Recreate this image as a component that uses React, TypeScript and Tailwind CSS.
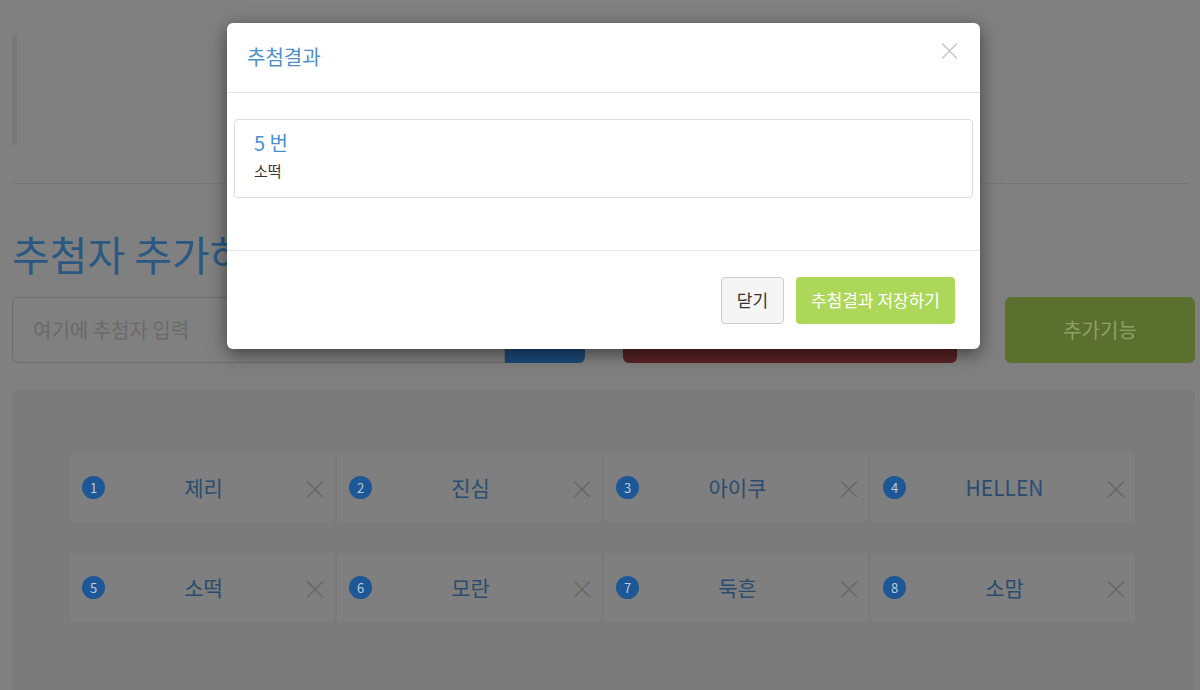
import React from "react";

const names = ["제리", "진심", "아이쿠", "HELLEN", "소떡", "모란", "둑흔", "소맘"];

function Card({ n, name }: { n: number; name: string }) {
  return (
    <div className="relative flex h-[71px] w-[266px] items-center rounded-[3px] border border-[#7a7a7a] bg-[#7f7f7f] pl-[12px] pr-[8px]">
      <div className="flex h-[23px] w-[23px] items-center justify-center rounded-full bg-[#1d5796] text-[13px] text-[#bccbdc]">
        {n}
      </div>
      <div className="flex-1 text-center text-[21px] text-[#2a4c70]">{name}</div>
      <div className="w-[24px] text-center text-[26px] font-light leading-none text-[#666666]">×</div>
    </div>
  );
}

export default function App() {
  return (
    <div
      className="relative h-[690px] w-[1200px] overflow-hidden bg-[#808080]"
      style={{ fontFamily: '"Noto Sans CJK KR", "Noto Sans", sans-serif' }}
    >
      {/* page */}
      <div className="pl-[12px] pt-[35px]">
        <div className="h-[110px] border-l-[5px] border-[#787878]" />
        <div className="mt-[38px] mr-[10px] h-px bg-[#777777]" />
        <h1 className="mt-[39px] text-[41px] leading-[60px] text-[#2a5883]">추첨자 추가하기</h1>
        <div className="mt-[14px] flex items-start">
          <div className="flex">
            <div className="flex h-[66px] w-[493px] items-center rounded-l-[6px] border border-[#6e6e6e] pl-[20px] text-[20px] text-[#6a6a6a]">
              여기에 추첨자 입력
            </div>
            <div className="h-[66px] w-[80px] rounded-r-[6px] bg-[#1d4a79]" />
          </div>
          <div className="ml-[38px] h-[66px] w-[334px] rounded-[6px] bg-[#592326]" />
          <div className="ml-[48px] flex h-[66px] w-[190px] items-center justify-center rounded-[6px] bg-[#5b6f2e] text-[20px] text-[#8ea06a]">
            추가기능
          </div>
        </div>
        <div className="mt-[27px] mr-[5px] h-[320px] rounded-[4px] bg-[#7b7b7b] pl-[57px] pt-[62px]">
          <div className="flex flex-col gap-[29px]">
            <div className="flex gap-[1px]">
              {names.slice(0, 4).map((nm, i) => (
                <Card key={nm} n={i + 1} name={nm} />
              ))}
            </div>
            <div className="flex gap-[1px]">
              {names.slice(4).map((nm, i) => (
                <Card key={nm} n={i + 5} name={nm} />
              ))}
            </div>
          </div>
        </div>
      </div>

      {/* modal */}
      <div className="absolute left-[227px] top-[23px] w-[753px] rounded-[6px] bg-white shadow-[0_5px_18px_rgba(0,0,0,0.5)]">
        <div className="flex h-[70px] items-center justify-between border-b border-[#e5e5e5] pl-[20px] pr-[18px]">
          <div className="-mt-[2px] text-[20px] text-[#4f8fca]">추첨결과</div>
          <div className="-mt-[16px] text-[25px] font-light leading-none text-[#c4c4c4]">×</div>
        </div>
        <div className="h-[157px] px-[7px] pt-[26px]">
          <div className="h-[79px] rounded-[4px] border border-[#dddddd] px-[19px] pt-[8px]">
            <div className="text-[20px] leading-[30px] text-[#4a8fcf]">5 번</div>
            <div className="mt-[2px] text-[15px] leading-[22px] text-[#333333]">소떡</div>
          </div>
        </div>
        <div className="flex h-[99px] items-center justify-end gap-[12px] border-t border-[#e5e5e5] pr-[25px]">
          <div className="flex h-[47px] w-[63px] items-center justify-center rounded-[4px] border border-[#cccccc] bg-[#f5f5f5] text-[17px] text-[#333333]">
            닫기
          </div>
          <div className="flex h-[47px] w-[159px] items-center justify-center rounded-[4px] bg-[#acd759] text-[17px] text-white">
            추첨결과 저장하기
          </div>
        </div>
      </div>
    </div>
  );
}
